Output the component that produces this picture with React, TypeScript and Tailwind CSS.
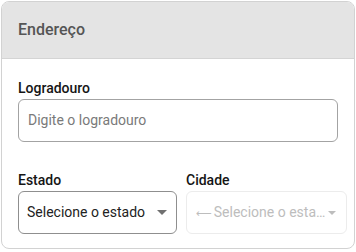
import React from "react";

function Caret({ color, w = 10, h = 5 }: { color: string; w?: number; h?: number }) {
  return (
    <svg width={w} height={h} viewBox={`0 0 ${w} ${h}`} className="shrink-0">
      <path d={`M0 0 L${w} 0 L${w / 2} ${h} Z`} fill={color} />
    </svg>
  );
}

export default function App() {
  return (
    <div className="pl-px pt-px bg-white w-[356px] h-[252px]" style={{ fontFamily: "Roboto, 'Liberation Sans', sans-serif" }}>
      <div className="w-[354px] h-[248px] border border-[#d2d2d2] rounded-lg overflow-hidden bg-white flex flex-col">
        <div className="h-[57px] shrink-0 bg-[#e4e4e4] border-b border-[#d4d4d4] flex items-center px-4">
          <span className="text-[16px] font-medium text-[#555555] leading-none">Endereço</span>
        </div>
        <div className="px-4 pt-[21px] flex flex-col">
          <label className="text-[14px] leading-4 font-medium text-[#151515]">Logradouro</label>
          <div className="mt-[3px] h-[43px] w-[320px] border border-[#a3a3a3] rounded-md flex items-center pl-[9px]">
            <span className="text-[14px] text-[#7a7a7a]">Digite o logradouro</span>
          </div>
          <div className="mt-[30px] flex gap-[9px]">
            <div className="flex flex-col w-[159px] shrink-0">
              <label className="text-[14px] leading-4 font-medium text-[#151515]">Estado</label>
              <div className="mt-[3px] h-[43px] border border-[#8f8f8f] rounded-md flex items-center pl-[8px] pr-[9px] justify-between">
                <span className="text-[14px] text-[#222222] whitespace-nowrap">Selecione o estado</span>
                <Caret color="#707070" />
              </div>
            </div>
            <div className="flex flex-col w-[161px] shrink-0">
              <label className="text-[14px] leading-4 font-medium text-[#151515]">Cidade</label>
              <div className="mt-[3px] h-[43px] border border-[#ececec] rounded-md flex items-center pl-[9px] pr-[10px]">
                <span className="text-[14px] text-[#bdbdbd] whitespace-nowrap overflow-hidden text-ellipsis flex-1 min-w-0">
                  <span style={{ fontFamily: "'DejaVu Sans', sans-serif" }} className="text-[11px] mr-[2px]">⟵</span>Selecione o estado
                </span>
                <Caret color="#bdbdbd" w={8} h={4} />
              </div>
            </div>
          </div>
        </div>
      </div>
    </div>
  );
}
